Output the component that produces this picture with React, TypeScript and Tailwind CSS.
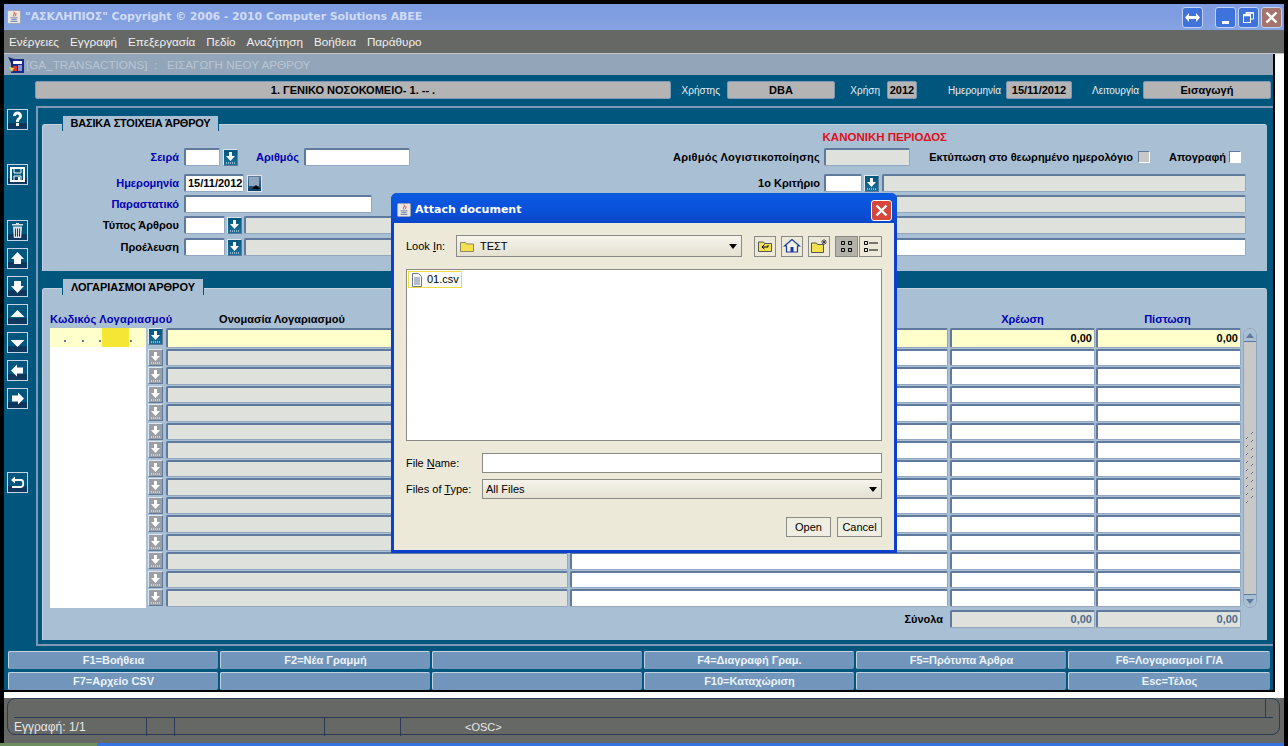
import type { ReactNode } from "react";

const inputBevel = "border-t-2 border-l-2 border-b border-r border-t-[#5f7a9c] border-l-[#5f7a9c] border-b-[#93a8c0] border-r-[#93a8c0] rounded-[2px]";
const labelText = "text-[11px] font-bold font-['Liberation_Sans',sans-serif] whitespace-nowrap";
const blueLabel = labelText + " text-[#0000b4] text-right";
const blackLabel = labelText + " text-black text-right";

const Field = ({ className, children }: { className: string; children?: ReactNode }) => (
  <div className={`${inputBevel} ${className} h-full flex items-center px-[2px] ${labelText} text-black overflow-hidden`}>{children}</div>
);

const DownBtn = ({ off = false, className = "" }: { off?: boolean; className?: string }) => (
  <div className={`w-[15px] h-[17px] shrink-0 border border-t-[#dfe6ee] border-l-[#dfe6ee] border-b-[#5f7a9c] border-r-[#5f7a9c] flex items-center justify-center ${off ? "bg-[#9a9fa6]" : "bg-gradient-to-b from-[#00567d] to-[#1b6f99]"} ${className}`}>
    <svg width="11" height="13" viewBox="0 0 11 13">
      <path d="M4 1h3v4h3l-4.500 5L1 5h3z" fill="#fff" />
      <path d="M1 12h9" stroke="#fff" strokeDasharray="1 1" />
    </svg>
  </div>
);

const ToolBtn = ({ className = "", children }: { className?: string; children: ReactNode }) => (
  <div className={`w-[21px] h-[21px] ml-[3px] border border-[#c3d4e2] bg-[linear-gradient(#00567d_0%,#00567d_68%,#0e3358_72%,#0e3a62_100%)] flex items-center justify-center ${className}`}>
    <svg width="17" height="17" viewBox="0 0 17 17" fill="#fff">{children}</svg>
  </div>
);

const JavaIcon = ({ size = 14 }: { size?: number }) => (
  <svg width={size} height={size} viewBox="0 0 16 16">
    <rect x="0.5" y="0.5" width="15" height="15" rx="1.5" fill="#e9e7e0" stroke="#9aa0b0" />
    <path d="M8 2c2 2-2 3 0 5.500M10 3.500c1 1.500-1 2 0 3.500" stroke="#d9302a" fill="none" />
    <path d="M4 9h8M5 11h6M4 13h8" stroke="#5874a8" />
  </svg>
);

const Combo = ({ className, children }: { className: string; children: ReactNode }) => (
  <div className={`border border-[#8a8a86] bg-gradient-to-b from-[#f6f4ec] to-[#e4e1d2] flex items-center justify-between ${className}`}>
    {children}
    <svg width="10" height="5" viewBox="0 0 10 5" className="mr-[3px]"><path d="M1 0h8L5 5z" fill="#000" /></svg>
  </div>
);

const IconBtn = ({ className = "", children }: { className?: string; children: ReactNode }) => (
  <div className={`h-[21px] border border-[#8a8a86] flex items-center justify-center shrink-0 ${className}`}>
    <svg width="18" height="16" viewBox="0 0 18 16">{children}</svg>
  </div>
);

const keys = [
  "F1=Βοήθεια", "F2=Νέα Γραμμή", "", "F4=Διαγραφή Γραμ.", "F5=Πρότυπα Άρθρα", "F6=Λογαριασμοί Γ/Α",
  "F7=Αρχείο CSV", "", "", "F10=Καταχώριση", "", "Esc=Τέλος",
];

const menu = ["Ενέργειες", "Εγγραφή", "Επεξεργασία", "Πεδίο", "Αναζήτηση", "Βοήθεια", "Παράθυρο"];

const rows = Array.from({ length: 15 }, (_, i) => i);

const Tab = ({ className, children }: { className: string; children: ReactNode }) => (
  <div className={`absolute left-[19px] bg-[#a9bfd4] border-x border-[#00567d] flex items-center justify-center text-[11px] font-bold text-black font-['Liberation_Sans',sans-serif] whitespace-nowrap ${className}`}>
    {children}
  </div>
);

const Dot = ({ className }: { className: string }) => <div className={`w-[2px] h-[2px] mb-[5px] bg-[#5f7a9c] ${className}`} />;

export default function App() {
  return (
    <div className="relative w-[1288px] h-[746px] overflow-hidden bg-black font-['Liberation_Sans',sans-serif]">
      <div className="ml-[4px] mr-[4px] pt-[4px] flex flex-col h-full">
        {/* title bar */}
        <div className="h-[26px] shrink-0 bg-gradient-to-b from-[#7e9ce0] via-[#7f9de0] to-[#86a3e2] flex items-center pl-[3px] pr-[2px]">
          <JavaIcon />
          <span className="ml-[4px] text-[11px] tracking-[-0.1px] font-bold text-[#d0dbf5] font-['DejaVu_Sans',sans-serif] whitespace-nowrap">"ΑΣΚΛΗΠΙΟΣ" Copyright © 2006 - 2010 Computer Solutions ABEE</span>
          <div className="ml-auto flex items-center">
            <div className="w-[21px] h-[21px] rounded-[3px] bg-[#3f73dc] border border-[#c3d2f2] flex items-center justify-center mr-[12px]">
              <svg width="15" height="9" viewBox="0 0 15 9"><path d="M0 4.500L4 0v3h7V0l4 4.500L11 9V6H4v3z" fill="#fff" /></svg>
            </div>
            <div className="w-[21px] h-[21px] rounded-[3px] bg-[#3f73dc] border border-[#c3d2f2] flex items-end justify-center pb-[3px] mr-[2px]">
              <div className="w-[7px] h-[3px] bg-white" />
            </div>
            <div className="w-[21px] h-[21px] rounded-[3px] bg-[#3f73dc] border border-[#c3d2f2] flex items-center justify-center mr-[2px]">
              <svg width="13" height="13" viewBox="0 0 13 13" fill="none" stroke="#fff"><path d="M4 3V1.500h7.500V8H9" /><rect x="1.500" y="3.500" width="7" height="8" /><path d="M1.500 4.500h7M4 2h7" strokeWidth="1.500" /></svg>
            </div>
            <div className="w-[21px] h-[21px] rounded-[3px] bg-[#a5746f] border border-[#c3d2f2] flex items-center justify-center">
              <svg width="13" height="13" viewBox="0 0 13 13"><path d="M1.500 1.500l10 10M11.500 1.500l-10 10" stroke="#fff" strokeWidth="2.400" /></svg>
            </div>
          </div>
        </div>

        {/* menu */}
        <div className="h-[24px] shrink-0 bg-[#666866] flex items-center pl-[5px] gap-[11px] text-[11.7px] text-[#f0f0f0] border-b border-[#c8c8c8]">
          {menu.map((m) => <span key={m}>{m}</span>)}
        </div>

        {/* internal frame, white desktop behind it */}
        <div className="h-[644px] shrink-0 bg-white">
          <div className="w-[1271px] h-[638px] flex flex-col bg-[#00567d] border-r-2 border-b-2 border-black">
            <div className="h-[21px] shrink-0 bg-[#93a5b9] flex items-center pl-[2px] text-[11.7px] text-[#b9c5d2]">
              <svg width="20" height="19" viewBox="0 0 20 19">
                <rect x="5" y="4" width="13" height="14" fill="#1b2a8a" />
                <rect x="7" y="6" width="9" height="3" fill="#fff" />
                <path d="M7 11h4v5H7z" fill="#e23b2e" />
                <path d="M12 11h4M12 13h4M12 15h4" stroke="#fff" />
                <path d="M2 2l6 2-2 6z" fill="#12206e" />
                <path d="M3 12l3 5 2-4z" fill="#f4d83a" />
              </svg>
              <span className="whitespace-nowrap">[GA_TRANSACTIONS]&nbsp;&nbsp;:&nbsp;&nbsp;&nbsp;ΕΙΣΑΓΩΓΗ ΝΕΟΥ ΑΡΘΡΟΥ</span>
            </div>

            {/* header fields */}
            <div className="h-[18px] mt-[6px] shrink-0 flex items-stretch pl-[31px]">
              <div className="w-[636px] h-full bg-[#b4b4b4] border border-[#7d99b5] rounded-[2px] flex items-center justify-center text-[11px] font-bold text-black">1. ΓΕΝΙΚΟ ΝΟΣΟΚΟΜΕΙΟ- 1. -- .</div>
              <div className="w-[49px] text-[10px] text-[#e8eef3] flex items-center justify-end">Χρήστης</div>
              <div className="w-[108px] ml-[7px] bg-[#b4b4b4] border border-[#7d99b5] rounded-[2px] flex items-center justify-center text-[11px] font-bold">DBA</div>
              <div className="w-[45px] text-[10px] text-[#e8eef3] flex items-center justify-end">Χρήση</div>
              <div className="w-[30px] ml-[7px] bg-[#b4b4b4] border border-[#7d99b5] rounded-[2px] flex items-center justify-center text-[11px] font-bold">2012</div>
              <div className="w-[84px] text-[10px] text-[#e8eef3] flex items-center justify-end">Ημερομηνία</div>
              <div className="w-[66px] ml-[5px] bg-[#b4b4b4] border border-[#7d99b5] rounded-[2px] flex items-center justify-center text-[11px] font-bold">15/11/2012</div>
              <div className="w-[67px] text-[10px] text-[#e8eef3] flex items-center justify-end">Λειτουργία</div>
              <div className="w-[128px] ml-[4px] bg-[#b4b4b4] border border-[#7d99b5] rounded-[2px] flex items-center justify-center text-[11px] font-bold">Εισαγωγή</div>
            </div>

            <div className="flex h-[540px] shrink-0 mt-[7px]">
              {/* left toolbar */}
              <div className="w-[32px] shrink-0 pt-[3px] flex flex-col">
                <ToolBtn><path d="M4 5c0-6 9-6 9 0 0 3-3 3-3 6H7c0-4 3-4 3-6 0-2-3-2-3 0zM7 12h3v3H7z" /></ToolBtn>
                <ToolBtn className="mt-[34px]">
                  <path d="M1 1h15v15H1zM3 3v11h11V3z" fillRule="evenodd" />
                  <path d="M5 2h7v5H5zM5 10h7v5H5z" fill="none" stroke="#fff" />
                  <path d="M9 11h2v3H9z" />
                </ToolBtn>
                <ToolBtn className="mt-[35px]">
                  <path d="M7 1h3v1h4v1.500H3V2h4z" fill="#d8e0e8" />
                  <path d="M4 4.500h9l-.8 11.500H4.800zM6 6.500v8h1v-8zM8 6.500v8h1v-8zM10 6.500v8h1v-8z" fillRule="evenodd" fill="#d8e0e8" />
                </ToolBtn>
                <ToolBtn className="mt-[7px]"><path d="M8.500 2L15 9h-3v5H5V9H2z" /></ToolBtn>
                <ToolBtn className="mt-[7px]"><path d="M8.500 15L2 8h3V3h7v5h3z" /></ToolBtn>
                <ToolBtn className="mt-[7px]"><path d="M8.500 4L15.500 11H1.500z" /></ToolBtn>
                <ToolBtn className="mt-[7px]"><path d="M8.500 13L1.500 6h14z" /></ToolBtn>
                <ToolBtn className="mt-[7px]"><path d="M2 8.500L8 2.500v3h6v6H8v3z" /></ToolBtn>
                <ToolBtn className="mt-[7px]"><path d="M15 8.500L9 2.500v3H3v6h6v3z" /></ToolBtn>
                <ToolBtn className="mt-[63px]">
                  <path d="M2 6l4-3.500v7z" />
                  <path d="M5 6h7c3 0 3 7 0 7H3" fill="none" stroke="#fff" strokeWidth="1.800" />
                </ToolBtn>
              </div>

              {/* outer frame */}
              <div className="flex-1 flex flex-col border-t-2 border-l-2 border-b-2 border-[#7d99b5] pl-[4px] pr-[6px] pt-[16px] pb-[4px]">
                {/* basic data panel */}
                <div className="relative h-[147px] shrink-0 bg-[#a9bfd4] border-t border-l border-[#c5d3e0] rounded-tl-[3px] rounded-tr-[3px]">
                  <Tab className="w-[157px] -top-[9px] h-[15px] tracking-[-0.2px]">ΒΑΣΙΚΑ ΣΤΟΙΧΕΙΑ ΆΡΘΡΟΥ</Tab>
                  <div className="h-[23px] text-right pr-[320px] text-[11.5px] font-bold text-[#e0101a] leading-[24px]">ΚΑΝΟΝΙΚΗ ΠΕΡΙΟΔΟΣ</div>
                  <div className="flex flex-col gap-[4px]">
                    <div className="h-[18px] flex items-center">
                      <div className={`w-[136px] ${blueLabel}`}>Σειρά</div>
                      <Field className="w-[36px] ml-[5px] bg-white" />
                      <DownBtn className="ml-[3px]" />
                      <div className={`w-[61px] ${blueLabel}`}>Αριθμός</div>
                      <Field className="w-[106px] ml-[5px] bg-white" />
                      <div className={`w-[410px] tracking-[0.25px] ${blackLabel}`}>Αριθμός Λογιστικοποίησης</div>
                      <Field className="w-[86px] ml-[4px] bg-[#dfe1dd]" />
                      <div className={`w-[223px] ${blackLabel}`}>Εκτύπωση στο θεωρημένο ημερολόγιο</div>
                      <div className="w-[12px] h-[12px] ml-[5px] bg-[#c8c8c8] border border-t-[#5f7a9c] border-l-[#5f7a9c] border-b-white border-r-white" />
                      <div className={`w-[76px] ${blackLabel}`}>Απογραφή</div>
                      <div className="w-[12px] h-[12px] ml-[3px] bg-white border border-t-[#5f7a9c] border-l-[#5f7a9c] border-b-white border-r-white" />
                    </div>
                    <div className="h-[18px] mt-[4px] flex items-center">
                      <div className={`w-[136px] ${blueLabel}`}>Ημερομηνία</div>
                      <Field className="w-[60px] ml-[5px] bg-white">15/11/2012</Field>
                      <div className="w-[15px] h-[17px] ml-[3px] bg-gradient-to-b from-[#5a7fa0] to-[#0b3f63] border border-[#dfe6ee]">
                        <svg width="13" height="15" viewBox="0 0 13 15"><rect x="1" y="1" width="10" height="9" fill="#8fa8c0" /><path d="M4 13l4-4 4 4z" fill="#000" /></svg>
                      </div>
                      <div className={`w-[558px] ${blackLabel}`}>1ο Κριτήριο</div>
                      <Field className="w-[38px] ml-[4px] bg-white" />
                      <DownBtn className="ml-[2px]" />
                      <Field className="w-[364px] ml-[3px] bg-[#dfe1dd]" />
                    </div>
                    <div className="h-[18px] -mt-[1px] flex items-center">
                      <div className={`w-[136px] ${blueLabel}`}>Παραστατικό</div>
                      <Field className="w-[188px] ml-[5px] bg-white" />
                      <Field className="w-[364px] ml-[510px] bg-[#dfe1dd]" />
                    </div>
                    <div className="h-[18px] -mt-[1px] flex items-center">
                      <div className={`w-[136px] ${blackLabel}`}>Τύπος Άρθρου</div>
                      <Field className="w-[41px] ml-[5px] bg-white" />
                      <DownBtn className="ml-[2px]" />
                      <Field className="w-[1002px] ml-[2px] bg-[#dfe1dd]" />
                    </div>
                    <div className="h-[18px] flex items-center">
                      <div className={`w-[136px] ${blackLabel}`}>Προέλευση</div>
                      <Field className="w-[41px] ml-[5px] bg-white" />
                      <DownBtn className="ml-[2px]" />
                      <Field className="w-[316px] ml-[2px] bg-[#dfe1dd]" />
                      <Field className="w-[686px] bg-white" />
                    </div>
                  </div>
                </div>

                {/* accounts panel */}
                <div className="relative mt-[17px] h-[352px] shrink-0 bg-[#a9bfd4] border-t border-l border-[#c5d3e0] rounded-tl-[3px] rounded-tr-[3px] pl-[7px]">
                  <Tab className="w-[142px] -top-[10px] h-[16px]">ΛΟΓΑΡΙΑΣΜΟΙ ΆΡΘΡΟΥ</Tab>
                  <div className="h-[39px] pt-[21px] flex items-center text-[11px] font-bold">
                    <div className="w-[116px] text-[#0000b4] whitespace-nowrap tracking-[0.2px]">Κωδικός Λογαριασμού</div>
                    <div className="w-[232px] text-center text-black">Ονομασία Λογαριασμού</div>
                    <div className="w-[552px]" />
                    <div className="w-[145px] text-center text-[#0000b4]">Χρέωση</div>
                    <div className="w-[145px] text-center text-[#0000b4]">Πίστωση</div>
                  </div>
                  <div className="flex h-[280px]">
                    <div className="w-[96px] shrink-0 bg-white">
                      <div className="h-[19px] bg-[#ffffcc] flex items-end">
                        <Dot className="ml-[14px]" />
                        <Dot className="ml-[16px]" />
                        <Dot className="ml-[15px]" />
                        <div className="w-[27px] self-stretch ml-[1px] bg-[#f5e534]" />
                        <Dot className="ml-[1px]" />
                      </div>
                    </div>
                    <div className="flex-1 grid grid-rows-[repeat(15,1fr)] ml-[2px]">
                      {rows.map((i) => (
                        <div key={i} className="flex items-stretch pb-[1px]">
                          <DownBtn off={i > 0} />
                          <Field className={`w-[402px] ml-[3px] ${i === 0 ? "bg-[#ffffcc]" : "bg-[#dfe1dd]"}`} />
                          <Field className={`w-[378px] ml-[2px] ${i === 0 ? "bg-[#ffffcc]" : "bg-white"}`} />
                          <Field className={`w-[145px] ml-[2px] justify-end ${i === 0 ? "bg-[#ffffcc]" : "bg-white"}`}>{i === 0 ? "0,00" : ""}</Field>
                          <Field className={`w-[145px] ml-[1px] justify-end ${i === 0 ? "bg-[#ffffcc]" : "bg-white"}`}>{i === 0 ? "0,00" : ""}</Field>
                        </div>
                      ))}
                    </div>
                    <div className="w-[14px] ml-[2px] mr-[10px] shrink-0 flex flex-col bg-[#c8c8c8] border border-[#8fa5be] rounded-t-[7px] rounded-b-[7px] overflow-hidden">
                      <div className="h-[13px] bg-[#a9bfd4] border-b border-[#5f7a9c] flex items-center justify-center">
                        <svg width="8" height="5" viewBox="0 0 8 5"><path d="M0 5l4-5 4 5z" fill="#5f7a9c" /></svg>
                      </div>
                      <div className="flex-1 flex items-center justify-center">
                        <svg width="10" height="72" viewBox="0 0 10 72" stroke="#5f7a9c">
                          {[0, 8, 16, 24, 32, 40, 48, 56, 64].map((y) => (
                            <path key={y} d={`M1 ${y + 7}l2-2M6 ${y + 2}l2-2`} />
                          ))}
                        </svg>
                      </div>
                      <div className="h-[13px] bg-[#a9bfd4] border-t border-[#5f7a9c] flex items-center justify-center">
                        <svg width="8" height="5" viewBox="0 0 8 5"><path d="M0 0l4 5 4-5z" fill="#5f7a9c" /></svg>
                      </div>
                    </div>
                  </div>
                  <div className="h-[18px] mt-[2px] flex items-stretch">
                    <div className={`w-[893px] ${blackLabel} self-center`}>Σύνολα</div>
                    <Field className="w-[145px] ml-[7px] justify-end bg-[#dfe1dd] text-[#4c6a8c]!">0,00</Field>
                    <Field className="w-[145px] ml-[1px] justify-end bg-[#dfe1dd] text-[#4c6a8c]!">0,00</Field>
                  </div>
                </div>
              </div>
            </div>

            {/* function keys */}
            <div className="grid grid-cols-[210px_210px_210px_210px_210px_202px] gap-x-[2px] gap-y-[2px] pl-[4px] pt-[5px] h-[44px] shrink-0">
              {keys.map((k, i) => (
                <div key={i} className="h-[18px] bg-[#7296bb] border-t border-l border-[#c5d3e0] rounded-[2px] flex items-center justify-center text-[11px] font-bold text-[#eef3f8]">{k}</div>
              ))}
            </div>
          </div>
        </div>

        {/* status bar */}
        <div className="flex-1 bg-[#666866] pl-[3px] pr-[4px] min-h-0">
          <div className="h-[37px] border border-[#2b3a55] rounded-[8px] relative text-[12px] text-[#e8e8e8]">
            <div className="absolute left-[6px] right-[6px] top-[18px] border-t border-[#2b3a55]" />
            <div className="absolute right-[13px] top-0 h-[19px] border-l border-[#2b3a55]" />
            <div className="h-[19px]" />
            <div className="h-[18px] flex items-center">
              <div className="w-[139px] pl-[6px] h-full border-r border-[#2b3a55] flex items-center">Εγγραφή: 1/1</div>
              <div className="w-[28px] h-full border-r border-[#2b3a55]" />
              <div className="w-[150px] h-full border-r border-[#2b3a55]" />
              <div className="w-[76px] h-full border-r border-[#2b3a55]" />
              <div className="ml-[64px] text-[11px]">&lt;OSC&gt;</div>
            </div>
          </div>
        </div>
      </div>

      {/* taskbar sliver under the window */}
      <div className="absolute left-0 right-[4px] bottom-0 h-[3px] flex">
        <div className="w-[97px] bg-[#6d8f60]" />
        <div className="flex-1 bg-[#3574e0]" />
      </div>

      {/* file dialog */}
      <div className="absolute left-[391px] top-[193px] w-[506px] h-[360px] flex flex-col rounded-t-[6px] bg-[#0a3fd0] border-[3px] border-t-0 border-[#0a3fd0]">
        <div className="h-[30px] shrink-0 -mx-[3px] rounded-t-[6px] bg-gradient-to-b from-[#0a5ae0] via-[#0a52dc] to-[#0a46c8] flex items-center pl-[6px] pr-[5px] pt-[4px]">
          <JavaIcon />
          <span className="ml-[4px] text-[11px] font-bold text-white font-['DejaVu_Sans',sans-serif]">Attach document</span>
          <div className="ml-auto w-[21px] h-[21px] rounded-[3px] bg-[#d6463a] border border-white flex items-center justify-center">
            <svg width="13" height="13" viewBox="0 0 13 13"><path d="M1.500 1.500l10 10M11.500 1.500l-10 10" stroke="#fff" strokeWidth="2.400" /></svg>
          </div>
        </div>
        <div className="flex-1 bg-[#ece9d8] px-[12px] text-[11px] text-black font-['Liberation_Sans',sans-serif] flex flex-col">
          <div className="h-[22px] mt-[12px] flex items-center">
            <span className="w-[50px]">Look <u>I</u>n:</span>
            <Combo className="w-[286px] h-[22px]">
              <div className="flex items-center pl-[3px]">
                <svg width="14" height="12" viewBox="0 0 14 12"><path d="M.5 2.500h5l1 1.500h7v7.500H.5z" fill="#f5e050" stroke="#8a8a60" /></svg>
                <span className="ml-[6px] text-[11px]">ΤΕΣΤ</span>
              </div>
            </Combo>
            <IconBtn className="w-[22px] ml-[12px]">
              <path d="M2.500 4h5l1 1.500h7v8h-13z" fill="#f5e050" stroke="#555" />
              <path d="M6 9l2.500-2.500M6 9l2.500 2M6 9h6V7" stroke="#000" fill="none" />
            </IconBtn>
            <IconBtn className="w-[22px] ml-[5px]">
              <path d="M9 1.500L1.500 8h2v6h11V8h2z" fill="#f0efe8" stroke="#1a3a9a" strokeWidth="1.200" />
              <rect x="7.500" y="9" width="3" height="5" fill="#1a3a9a" />
            </IconBtn>
            <IconBtn className="w-[22px] ml-[5px]">
              <path d="M1.500 5h5l1 1.500h6v8h-12z" fill="#f5e050" stroke="#555" />
              <path d="M14 1v6M11 4h6M12 2l4 4M16 2l-4 4" stroke="#333" strokeWidth="0.800" />
            </IconBtn>
            <IconBtn className="w-[23px] ml-[5px] bg-[#b4b2a8]">
              <path d="M3.500 3.500h3v3h-3zM10.500 3.500h3v3h-3zM3.500 10.500h3v3h-3zM10.500 10.500h3v3h-3z" fill="none" stroke="#000" />
            </IconBtn>
            <IconBtn className="w-[23px] ml-[1px]">
              <path d="M2.500 3.500h3v3h-3zM2.500 10.500h3v3h-3z" fill="none" stroke="#000" />
              <path d="M7 5h9M7 12h9" stroke="#000" />
            </IconBtn>
          </div>
          <div className="h-[172px] mt-[12px] bg-white border border-[#8a8a86] p-[1px]">
            <div className="w-[54px] h-[17px] border border-[#f0dc40] flex items-center">
              <svg width="12" height="14" viewBox="0 0 12 14" className="ml-[2px]"><path d="M1.500.5h6l3 3v10h-9z" fill="#fff" stroke="#6a7a8a" /><path d="M3 5h6M3 7h6M3 9h6M3 11h6" stroke="#6a7a9a" /></svg>
              <span className="ml-[4px]">01.csv</span>
            </div>
          </div>
          <div className="h-[20px] mt-[12px] flex items-center">
            <span className="w-[76px]">File <u>N</u>ame:</span>
            <div className="w-[400px] h-full bg-white border border-[#8a8a86]" />
          </div>
          <div className="h-[20px] mt-[6px] flex items-center">
            <span className="w-[76px]">Files of <u>T</u>ype:</span>
            <Combo className="w-[400px] h-full"><span className="pl-[3px]">All Files</span></Combo>
          </div>
          <div className="flex justify-end gap-[6px] mt-[18px]">
            <div className="w-[45px] h-[20px] border border-[#8a8a86] bg-[#f0eee2] flex items-center justify-center">Open</div>
            <div className="w-[45px] h-[20px] border border-[#8a8a86] bg-[#f0eee2] flex items-center justify-center">Cancel</div>
          </div>
        </div>
      </div>
    </div>
  );
}
